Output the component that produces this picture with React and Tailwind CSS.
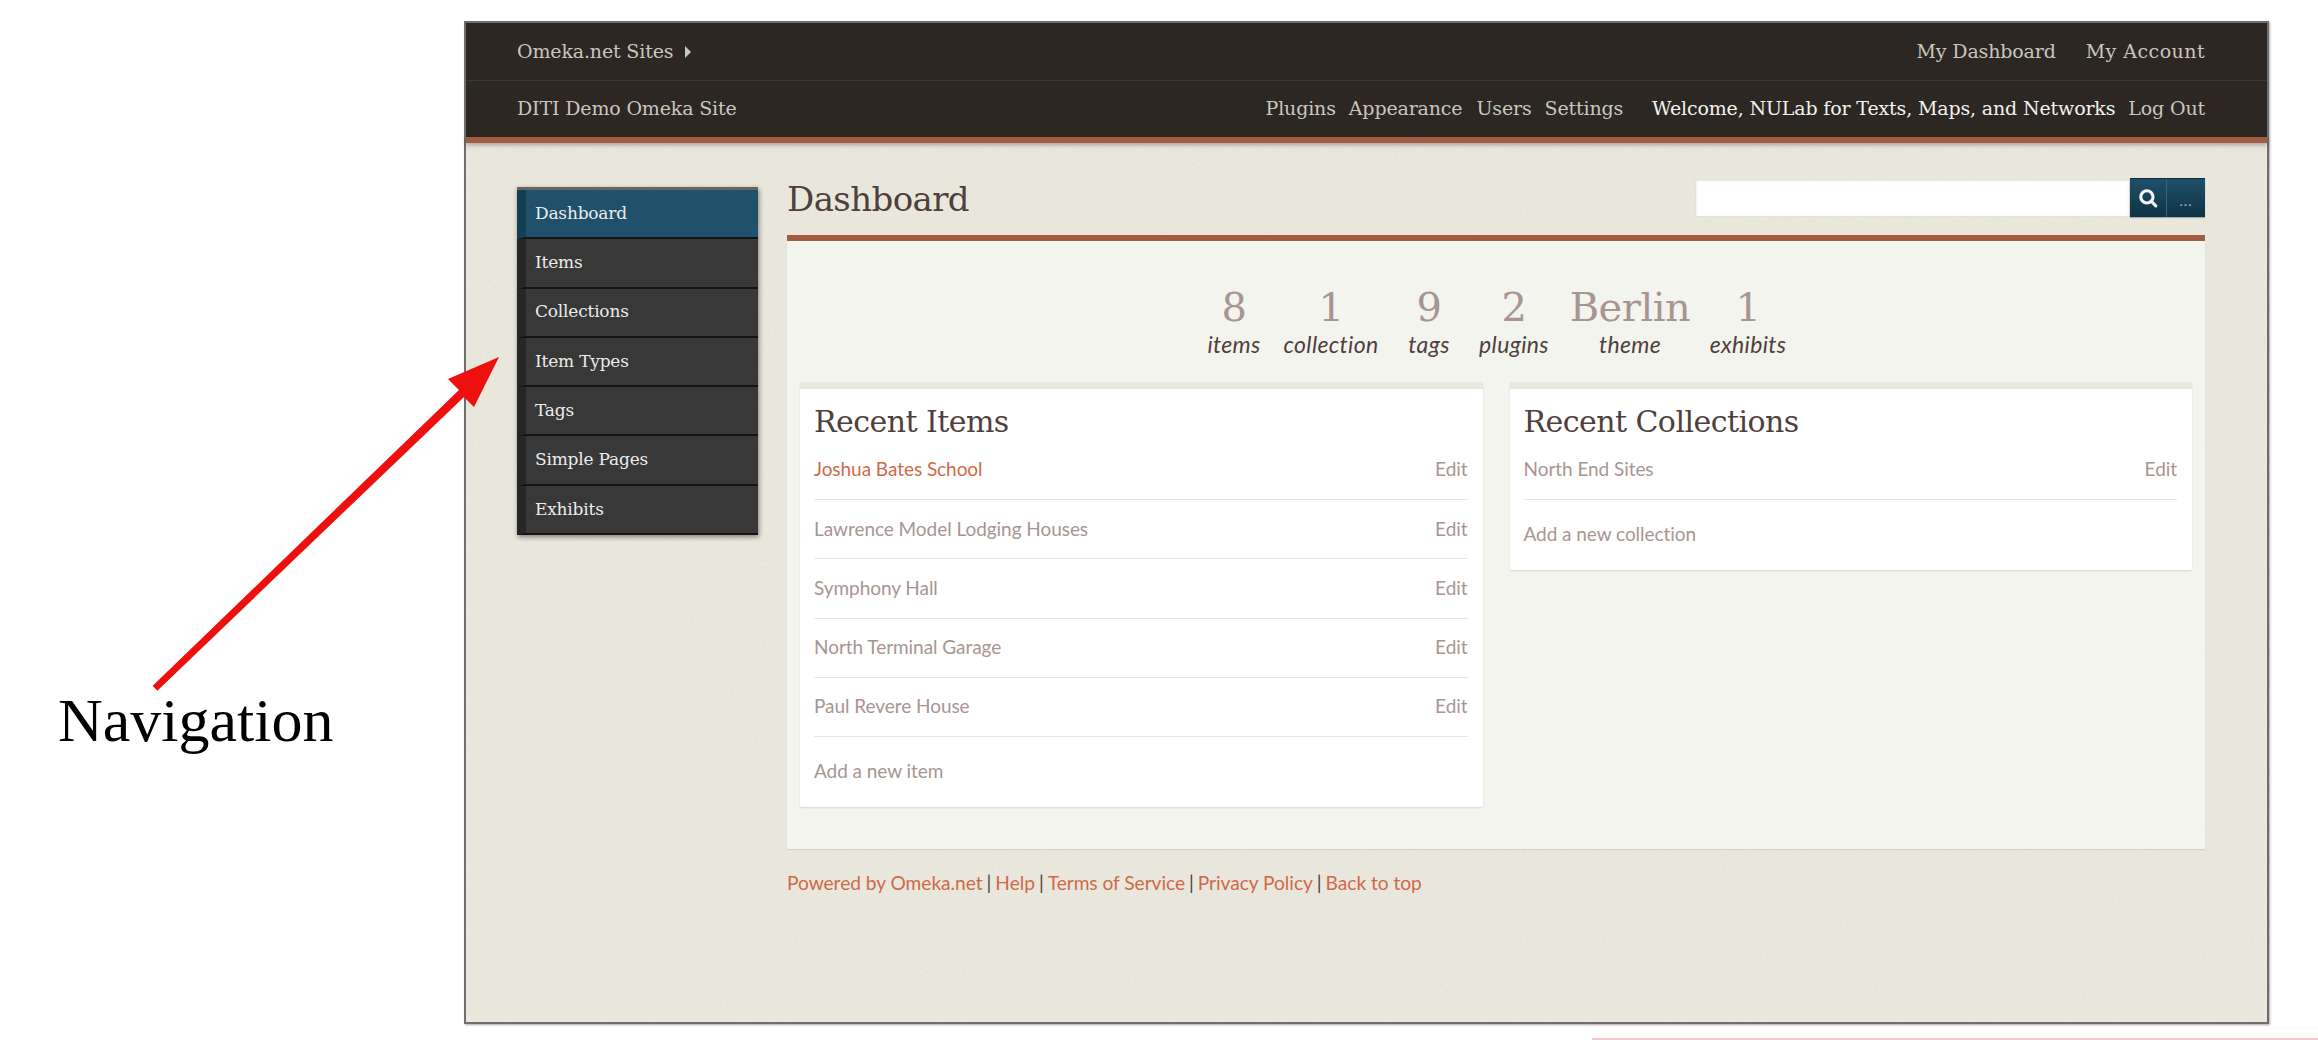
import React from 'react';

const slab = "font-['DejaVu_Serif',serif]";
const navItems = ['Dashboard', 'Items', 'Collections', 'Item Types', 'Tags', 'Simple Pages', 'Exhibits'];
const recentItems = ['Joshua Bates School', 'Lawrence Model Lodging Houses', 'Symphony Hall', 'North Terminal Garage', 'Paul Revere House'];
const stats = [
  { value: '8', label: 'items', width: 'w-[94px]' },
  { value: '1', label: 'collection', width: 'w-[100px]' },
  { value: '9', label: 'tags', width: 'w-[96px]' },
  { value: '2', label: 'plugins', width: 'w-[74px]' },
  { value: 'Berlin', label: 'theme', width: 'w-[158px]' },
  { value: '1', label: 'exhibits', width: 'w-[78px]' },
];
const footerLinks = ['Powered by Omeka.net', 'Help', 'Terms of Service', 'Privacy Policy', 'Back to top'];

const Paper = () => (
  <svg className="absolute inset-0 w-full h-full opacity-[0.07] pointer-events-none" aria-hidden="true">
    <filter id="paper">
      <feTurbulence type="fractalNoise" baseFrequency="0.35" numOctaves="3" seed="4" />
      <feColorMatrix type="saturate" values="0" />
    </filter>
    <rect width="100%" height="100%" filter="url(#paper)" />
  </svg>
);

const SideNav = () => (
  <nav className="w-[241px] shrink-0 mt-[9px] self-start border-t-[3px] border-[#66665f] shadow-[1px_2px_5px_rgba(0,0,0,0.45)]">
    {navItems.map((item, i) => (
      <div
        key={item}
        className={`h-[49.3px] flex items-center border-l-[9px] pl-[9px] border-b-2 border-b-[#141414] text-[17px] tracking-[-0.2px] text-[#ececec] ${slab} ${
          i === 0 ? 'bg-[#20506a] border-l-[#153f55]' : 'bg-[#383838] border-l-[#262626]'
        }`}
      >
        {item}
      </div>
    ))}
  </nav>
);

const Card = ({ title, rows, addLabel, activeFirst }) => (
  <section className="flex-1 self-start bg-white border-t-[7px] border-[#e9e7db] rounded-[2px] shadow-[0_1px_2px_rgba(0,0,0,0.12)] pl-[14px] pr-[15px]">
    <h2 className={`text-[30px] leading-[39px] pt-[13px] text-[#4f3f3d] tracking-[-0.55px] ${slab}`}>{title}</h2>
    <div>
      {rows.map((row, i) => (
        <div key={row} className="h-[59.2px] flex items-center justify-between border-b border-[#e6e6e6] pb-[1px] text-[19px] tracking-[-0.05px] text-[#a89592]">
          <span className={activeFirst && i === 0 ? 'text-[#d0694a]' : ''}>{row}</span>
          <span>Edit</span>
        </div>
      ))}
    </div>
    <div className="h-[70px] pb-[2px] flex items-center text-[19px] tracking-[-0.05px] text-[#a89592]">{addLabel}</div>
  </section>
);

export default function App() {
  return (
    <div className="relative w-[2318px] h-[1040px] bg-white overflow-hidden font-['Lato',sans-serif]">
      <div className="relative ml-[464px] mt-[21px] w-[1805px] h-[1003px] flex flex-col border-[2.5px] border-[#6e6e6e] bg-[#ebe9dd] shadow-[1px_1px_2px_rgba(0,0,0,0.35)]">
        <Paper />
        <header className={`relative text-[#c9c6bf] ${slab}`}>
          <div className="h-[58px] bg-[#2c2723] border-b border-[#3b3733] pl-[51px] pr-[62px] flex items-center justify-between text-[19px] tracking-[-0.15px]">
            <div className="flex items-center gap-[12px]">
              <span>Omeka.net Sites</span>
              <span className="w-0 h-0 border-y-[6px] border-y-transparent border-l-[6px] border-l-[#c9c6bf]" />
            </div>
            <div className="flex gap-[30px]">
              <span>My Dashboard</span>
              <span className="tracking-[0.45px]">My Account</span>
            </div>
          </div>
          <div className="h-[56px] pb-[2px] bg-[#2c2723] pl-[51px] pr-[62px] flex items-center justify-between text-[19px] tracking-[-0.15px]">
            <span>DITI Demo Omeka Site</span>
            <div className="flex items-center">
              <span className="mr-[13px]">Plugins</span>
              <span className="mr-[14px]">Appearance</span>
              <span className="mr-[13px]">Users</span>
              <span className="mr-[29px]">Settings</span>
              <span className="mr-[13px] text-[#f4f2ee]">Welcome, NULab for Texts, Maps, and Networks</span>
              <span>Log Out</span>
            </div>
          </div>
          <div className="h-[6px] bg-[#a35c42] shadow-[0_2px_4px_rgba(0,0,0,0.3)]" />
        </header>

        <div className="relative flex-1 flex gap-[29px] pl-[51px] pr-[62px] pt-[35px]">
          <SideNav />
          <main className="flex-1">
            <div className="h-[57px] flex items-start justify-between">
              <h1 className={`text-[34px] leading-[42px] text-[#4f3f3d] tracking-[-0.6px] ${slab}`}>Dashboard</h1>
              <div className="flex h-[39px]">
                <div className="w-[435px] h-[38px] mt-[1px] bg-white border border-[#e2e2de] shadow-[inset_0_1px_3px_rgba(0,0,0,0.1)]" />
                <div className="flex w-[75px] bg-gradient-to-b from-[#1f5069] to-[#0f3346] border-t border-[#0d2b3b] shadow-[0_1px_1px_rgba(0,0,0,0.25)]">
                  <div className="w-[37px] flex items-center justify-center border-r border-[#3d6273]">
                    <svg width="20" height="20" viewBox="0 0 18 18" fill="none" stroke="#f2f5f6" strokeWidth="2.8" strokeLinecap="round">
                      <circle cx="8" cy="8" r="5.5" />
                      <path d="M12.5 12.5 16 16" />
                    </svg>
                  </div>
                  <div className="flex-1 flex items-center justify-center pt-[4px] text-[14px] text-[#a8bcc6] tracking-[1px]">...</div>
                </div>
              </div>
            </div>

            <div className="h-[6px] bg-[#a35c42]" />
            <div className="bg-[#f4f4ef] px-[13px] pb-[42px] shadow-[0_1px_1px_rgba(0,0,0,0.08)]">
              <div className="h-[141px] pt-[42px] pr-[18px] flex justify-center">
                {stats.map((s) => (
                  <div key={s.label + s.value} className={`${s.width} flex flex-col items-center whitespace-nowrap`}>
                    <div className={`text-[40px] leading-[48px] text-[#a89592] tracking-[-0.5px] ${slab}`}>{s.value}</div>
                    <div className="text-[23px] leading-[26px] italic text-[#4f3f3d] tracking-[0.35px]">{s.label}</div>
                  </div>
                ))}
              </div>
              <div className="flex gap-[27px]">
                <Card title="Recent Items" rows={recentItems} addLabel="Add a new item" activeFirst />
                <Card title="Recent Collections" rows={['North End Sites']} addLabel="Add a new collection" />
              </div>
            </div>

            <div className="mt-[20px] text-[19.2px] tracking-[-0.05px] text-[#4f3f3d]">
              {footerLinks.map((link, i) => (
                <React.Fragment key={link}>
                  {i > 0 && <span className="mx-[4px]">|</span>}
                  <span className="text-[#d0694a]">{link}</span>
                </React.Fragment>
              ))}
            </div>
          </main>
        </div>
      </div>

      {/* annotation over the screenshot */}
      <svg className="absolute inset-0 pointer-events-none" width="2318" height="1040" aria-hidden="true">
        <polygon points="152.7,685.7 157.3,690.7 464,397 474,407 499,357 448,379 459,390" fill="#ee0f0f" />
      </svg>
      <div className="absolute left-[58px] top-[684px] text-[62px] leading-[72px] text-black font-['Liberation_Serif',serif]">Navigation</div>
      <div className="absolute left-[1592px] top-[1038px] w-[726px] h-[2px] bg-[#f5c9c9]" />
    </div>
  );
}
